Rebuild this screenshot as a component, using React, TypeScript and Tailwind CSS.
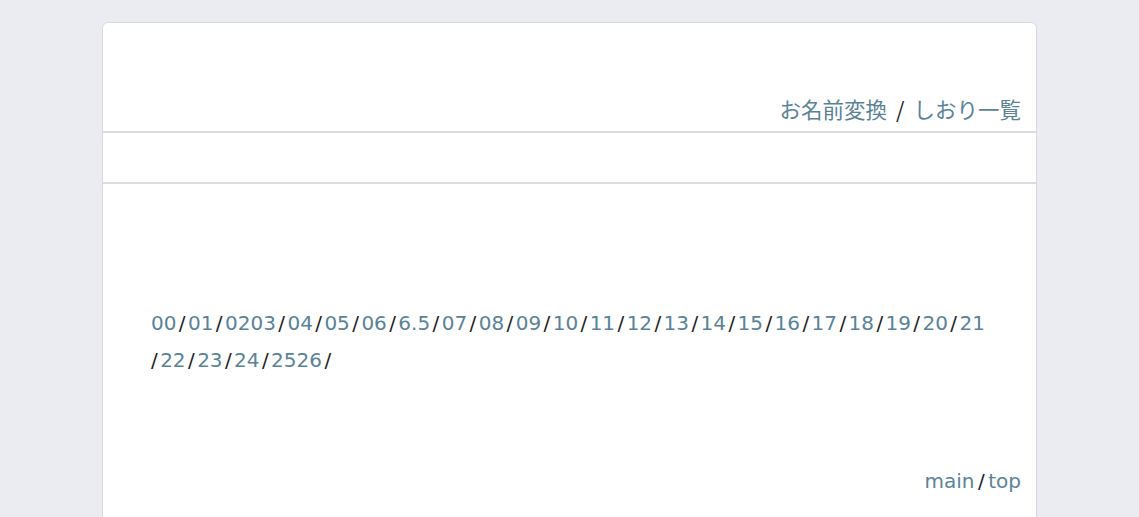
const chapters = [
  "00", "01", "0203", "04", "05", "06", "6.5", "07", "08", "09", "10",
  "11", "12", "13", "14", "15", "16", "17", "18", "19", "20", "21",
];
const chapters2 = ["22", "23", "24", "2526"];

function Sep({ first = false }: { first?: boolean }) {
  return (
    <span className={first ? "pr-[2.4px] text-[#222]" : "px-[2.4px] text-[#222]"}>
      /
    </span>
  );
}

function Link({ children }: { children: React.ReactNode }) {
  return (
    <a href="#" className="text-[#5a8397] no-underline">
      {children}
    </a>
  );
}

export default function App() {
  return (
    <div
      className="min-h-screen bg-[#ebecf1] pt-[22px]"
      style={{ fontFamily: '"DejaVu Sans", Verdana, "Noto Sans CJK JP", sans-serif' }}
    >
      <div className="mx-auto w-[935px] min-h-[600px] rounded-t-[6px] border border-[#d8d9dc] bg-white">
        {/* ヘッダー */}
        <div className="flex h-[108px] items-end justify-end pb-[7px] pr-[15px] text-[21.5px] leading-[30px]">
          <span style={{ fontFamily: '"Noto Sans CJK JP", sans-serif' }}>
            <Link>お名前変換</Link>
            <span className="px-[9px] text-[#222]">/</span>
            <Link>しおり一覧</Link>
          </span>
        </div>
        <div className="h-[53px] border-y-2 border-[#dcdcde]" />

        {/* 本文 */}
        <div className="px-[48px] pt-[121px] text-[20px] leading-[37px]">
          <p>
            {chapters.map((c, i) => (
              <span key={c}>
                <Link>{c}</Link>
                {i < chapters.length - 1 && <Sep />}
              </span>
            ))}
            <br />
            {chapters2.map((c, i) => (
              <span key={c}>
                <Sep first={i === 0} />
                <Link>{c}</Link>
              </span>
            ))}
            <Sep />
          </p>
          <div className="mt-[84px] -mr-[33px] text-right">
            <Link>main</Link>
            <span className="px-[3.5px] text-[#222]">/</span>
            <Link>top</Link>
          </div>
        </div>
      </div>
    </div>
  );
}
